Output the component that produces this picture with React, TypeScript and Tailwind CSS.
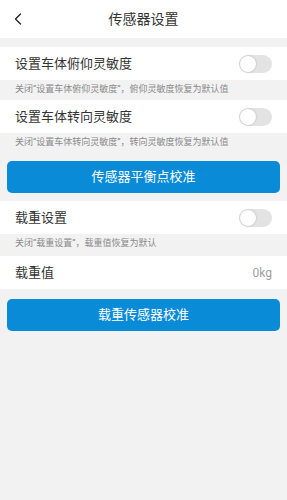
import { ChevronLeft } from 'lucide-react';

const FONT = "font-['Roboto','Noto_Sans_CJK_SC',sans-serif]";

function Toggle() {
  return (
    <div className="w-[33px] h-[18px] rounded-full bg-[#e3e3e3] flex items-center p-[1px]">
      <div className="w-[16px] h-[16px] rounded-full bg-white shadow-[0_0_2px_rgba(0,0,0,0.25)]" />
    </div>
  );
}

function SwitchRow({ label, hint }: { label: string; hint: string }) {
  return (
    <div>
      <div className="h-[33px] bg-white flex items-center justify-between pl-[15px] pr-[15px]">
        <span className="text-[13px] text-[#333]">{label}</span>
        <Toggle />
      </div>
      <div className="h-[20px] flex items-center pl-[15px] text-[9px] text-[#8a8a8a]">{hint}</div>
    </div>
  );
}

function BlueButton({ text }: { text: string }) {
  return (
    <div className="px-[7px]">
      <button className="w-full h-[32px] rounded-[5px] bg-[#0a8bd8] text-white text-[13px] flex items-center justify-center">
        {text}
      </button>
    </div>
  );
}

export default function App() {
  return (
    <div className={`${FONT} w-[287px] h-[500px] bg-[#f2f2f2]`}>
      <div className="h-[38px] bg-white flex items-center relative">
        <ChevronLeft className="w-[20px] h-[20px] text-[#222] ml-[8px]" strokeWidth={1.6} />
        <span className="absolute left-0 right-0 text-center text-[14px] text-[#333] pointer-events-none">
          传感器设置
        </span>
      </div>
      <div className="h-[9px]" />
      <SwitchRow label="设置车体俯仰灵敏度" hint="关闭“设置车体俯仰灵敏度”，俯仰灵敏度恢复为默认值" />
      <SwitchRow label="设置车体转向灵敏度" hint="关闭“设置车体转向灵敏度”，转向灵敏度恢复为默认值" />
      <div className="h-[8px]" />
      <BlueButton text="传感器平衡点校准" />
      <div className="h-[8px]" />
      <SwitchRow label="载重设置" hint="关闭“载重设置”，载重值恢复为默认" />
      <div className="h-[2px]" />
      <div className="h-[33px] bg-white flex items-center justify-between px-[15px]">
        <span className="text-[13px] text-[#333]">载重值</span>
        <span className="text-[12px] text-[#a0a0a0]">0kg</span>
      </div>
      <div className="h-[10px]" />
      <BlueButton text="载重传感器校准" />
    </div>
  );
}
